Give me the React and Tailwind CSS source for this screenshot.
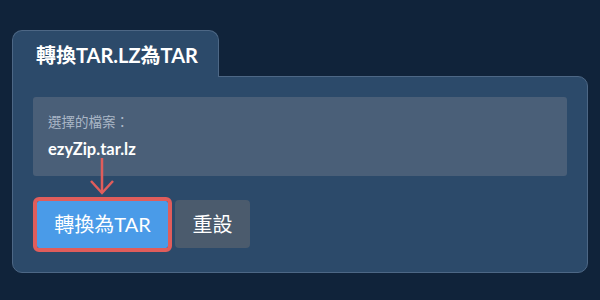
export default function App() {
  return (
    <div
      className="w-[600px] h-[300px] bg-[#10233a] pt-[30px] px-[12px]"
      style={{ fontFamily: 'Lato, "Noto Sans CJK TC", sans-serif' }}
    >
      <div className="flex flex-col w-[576px]">
        {/* tab */}
        <div className="relative z-10 -mb-px w-[207px] h-[47px] bg-[#2c4a6a] border border-b-0 border-[#4d6785] rounded-t-[10px] pl-[23px] pt-[11px]">
          <h1 className="text-[20px] font-bold text-white leading-[26px]">轉換TAR.LZ為TAR</h1>
        </div>

        {/* panel */}
        <div className="relative h-[197px] bg-[#2c4a6a] border border-[#4d6785] rounded-b-[10px] rounded-tr-[10px] px-[20px] pt-[20px]">
          <div className="h-[79px] bg-[#4a5f78] rounded-[3px] px-[15px] pt-[15px]">
            <p className="text-[13.5px] leading-[20px] text-[#aab7c7]">選擇的檔案：</p>
            <p className="mt-[7px] text-[16.5px] leading-[20px] font-bold text-white">ezyZip.tar.lz</p>
          </div>

          <div className="flex items-center gap-[7px] mt-[24px] ml-[4px]">
            <button className="w-[131px] h-[47px] bg-[#4a9be8] text-white text-[20px] rounded-[2px] outline-[4px] outline-solid outline-[#e05d5b]">
              轉換為TAR
            </button>
            <button className="w-[75px] h-[48px] bg-[#4b5b6d] text-white text-[20px] rounded-[4px]">
              重設
            </button>
          </div>

          {/* annotation arrow */}
          <svg className="absolute left-[76px] top-[81px]" width="26" height="38" viewBox="0 0 26 38">
            <path d="M13 0 V35" stroke="#e05d5b" strokeWidth="2.5" fill="none" />
            <path d="M2 23 L13 35 L24 23" stroke="#e05d5b" strokeWidth="2.5" fill="none" strokeLinejoin="miter" />
          </svg>
        </div>
      </div>
    </div>
  );
}
